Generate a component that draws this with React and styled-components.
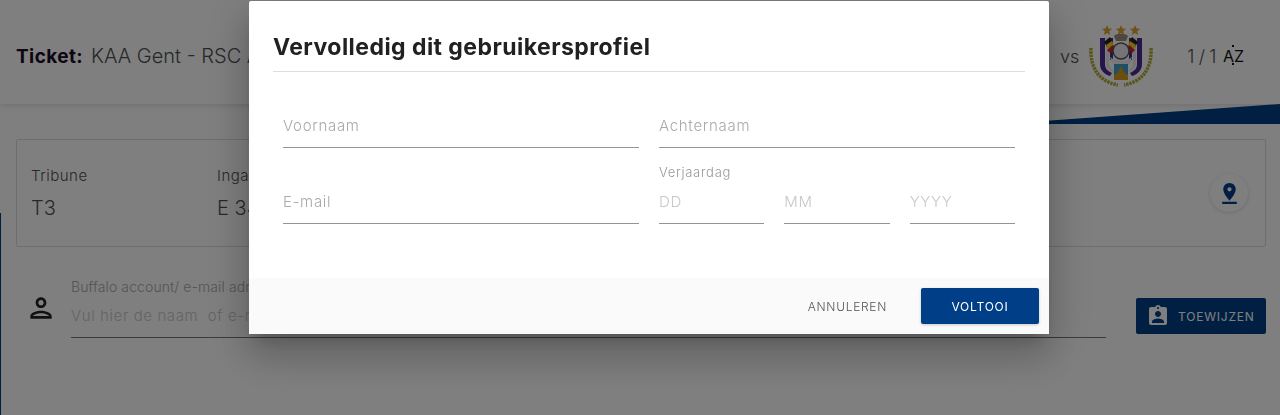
import React from 'react'
import styled, { createGlobalStyle } from 'styled-components'
import { MdOutlinePerson, MdPinDrop, MdAssignmentInd } from 'react-icons/md'

const GlobalStyle = createGlobalStyle`
  * { box-sizing: border-box; }
  html, body { margin: 0; height: 100%; background: #fff; overflow: hidden; }
  body { font-family: "Inter", "Open Sans", sans-serif; color: #505050; font-weight: 300; }
`

const Page = styled.div`
  position: relative;
  height: 415px;
  overflow: hidden;
`
const Header = styled.header`
  height: 104px;
  padding: 8px 36px 0 16px;
  display: flex;
  align-items: center;
  justify-content: space-between;
  background: #fff;
  box-shadow: 0 2px 6px rgba(0, 0, 0, 0.12);
`
const TicketTitle = styled.div`
  display: flex;
  align-items: center;
  gap: 8px;
  font-size: 20px;
  white-space: nowrap;
  b { font-size: 19px; font-weight: 700; color: #1a0a24; letter-spacing: 0.4px; }
`
const Match = styled.div`
  display: flex;
  align-items: center;
`
const Versus = styled.span`
  font-size: 18px;
  margin-right: 6px;
`
const Count = styled.span`
  font-size: 18px;
  margin-left: 32px;
  letter-spacing: -0.4px;
`
const SortMark = styled.span`
  position: relative;
  margin-left: 7px;
  font-size: 16px;
  font-weight: 400;
  color: #111;
  &::before, &::after {
    content: '';
    position: absolute;
    left: 9px;
    width: 2px;
    height: 2px;
    background: #111;
  }
  &::before { top: -1px; }
  &::after { bottom: 1px; }
`
const Wedge = styled.svg`
  position: absolute;
  top: 100px;
  right: 0;
  display: block;
`
const SideEdge = styled.div`
  position: absolute;
  left: 0;
  top: 213px;
  bottom: 0;
  width: 1px;
  background: #003f87;
`
const Content = styled.main`
  padding: 35px 14px 0 16px;
`
const InfoCard = styled.section`
  height: 108px;
  padding: 26px 14px 0;
  display: flex;
  border: 1px solid #ddd;
  border-radius: 2px;
  position: relative;
`
const InfoColumn = styled.div`
  width: 186px;
  span { display: block; font-size: 15px; line-height: 20px; letter-spacing: 0.5px; }
  strong { display: block; margin-top: 10px; font-size: 20px; line-height: 24px; font-weight: 300; }
`
const PinButton = styled.div`
  position: absolute;
  right: 17px;
  top: 34px;
  width: 38px;
  height: 38px;
  border-radius: 50%;
  display: flex;
  align-items: center;
  justify-content: center;
  background: #fff;
  color: #003f87;
  font-size: 25px;
  box-shadow: 0 1px 4px rgba(0, 0, 0, 0.14);
`
const AssignRow = styled.div`
  margin-top: 32px;
  display: flex;
  align-items: flex-start;
`
const PersonIcon = styled(MdOutlinePerson)`
  font-size: 32px;
  margin: 13px 14px 0 9px;
  flex: none;
  color: #222;
`
const AssignField = styled.div`
  width: 1035px;
  height: 59px;
  border-bottom: 1px solid #777;
  span { display: block; font-size: 14px; line-height: 16px; color: #a8a8a8; white-space: nowrap; letter-spacing: 0.1px; }
  em { display: block; margin-top: 11px; font-style: normal; font-size: 15px; line-height: 20px; color: #c8c8c8; letter-spacing: 0.6px; white-space: nowrap; }
`
const AssignButton = styled.button`
  margin-left: 30px;
  margin-top: 19px;
  width: 130px;
  height: 36px;
  display: flex;
  align-items: center;
  gap: 8px;
  padding: 0 0 0 10px;
  border: 0;
  border-radius: 2px;
  background: #003f87;
  color: #fff;
  font: 400 12px "Inter", sans-serif;
  letter-spacing: 0.8px;
  svg { font-size: 24px; }
`
const Overlay = styled.div`
  position: fixed;
  inset: 0;
  padding: 1px 0 0 18px;
  display: flex;
  justify-content: center;
  align-items: flex-start;
  background: rgba(0, 0, 0, 0.5);
`
const Modal = styled.div`
  width: 800px;
  height: 333px;
  display: flex;
  flex-direction: column;
  background: #fff;
  border-radius: 2px;
  box-shadow: 0 11px 15px -7px rgba(0,0,0,.2), 0 24px 38px 3px rgba(0,0,0,.14), 0 9px 46px 8px rgba(0,0,0,.12);
`
const ModalTitle = styled.h2`
  margin: 0 24px;
  height: 71px;
  padding-top: 31px;
  border-bottom: 1px solid #ddd;
  font-size: 23px;
  line-height: 30px;
  font-weight: 700;
  color: #212121;
  letter-spacing: 0.45px;
`
const FormGrid = styled.div`
  flex: 1;
  padding: 0 34px;
  display: grid;
  grid-template-columns: 1fr 1fr;
  column-gap: 20px;
  grid-auto-rows: 76px;
`
const Field = styled.div`
  align-self: end;
  height: 32px;
  border-bottom: 1px solid #949494;
  font-size: 15px;
  line-height: 20px;
  color: ${p => p.$faint ? '#c8c8c8' : '#aaa'};
  letter-spacing: 0.7px;
`
const DateField = styled.div`
  align-self: end;
  font-size: 13px;
  line-height: 16px;
  color: #999;
  letter-spacing: 0.7px;
`
const DateParts = styled.div`
  margin-top: 12px;
  display: grid;
  grid-template-columns: repeat(3, 1fr);
  column-gap: 20px;
`
const ModalFooter = styled.footer`
  height: 56px;
  padding: 0 10px;
  display: flex;
  align-items: center;
  justify-content: flex-end;
  background: #fafafa;
`
const CancelButton = styled.button`
  border: 0;
  background: none;
  margin-right: 34px;
  padding: 0;
  font: 300 12px "Inter", sans-serif;
  letter-spacing: 0.7px;
  color: #555;
`
const SubmitButton = styled.button`
  width: 118px;
  height: 36px;
  border: 0;
  border-radius: 2px;
  background: #003f87;
  color: #fff;
  font: 400 12px "Inter", sans-serif;
  letter-spacing: 0.8px;
  box-shadow: 0 1px 3px rgba(0, 0, 0, 0.2);
`

const Crest = () => (
  <svg width="70" height="72" viewBox="0 0 70 72">
    <g fill="#e0a030">
      <path d="M22 5l1.4 3.6 3.8.2-3 2.4 1 3.7-3.2-2-3.2 2 1-3.7-3-2.4 3.8-.2z" />
      <path d="M36 5l1.4 3.6 3.8.2-3 2.4 1 3.7-3.2-2-3.2 2 1-3.7-3-2.4 3.8-.2z" />
      <path d="M50 5l1.4 3.6 3.8.2-3 2.4 1 3.7-3.2-2-3.2 2 1-3.7-3-2.4 3.8-.2z" />
    </g>
    <path d="M6 28c-1 16 5 33 27 37M66 28c1 16-5 33-27 37" fill="none" stroke="#b5a83a" strokeWidth="3.5" strokeDasharray="2.5 .8" />
    <path d="M15 18h5v26c0 5 3 7 7 9l-2 3c-6-2-10-6-10-12z" fill="#4c2a92" />
    <path d="M57 18h-5v26c0 5-3 7-7 9l2 3c6-2 10-6 10-12z" fill="#4c2a92" />
    <path d="M21 18h3v25c0 4 2 6 4 7v2c-4-2-7-5-7-9z" fill="#e8e8f0" />
    <path d="M51 18h-3v25c0 4-2 6-4 7v2c4-2 7-5 7-9z" fill="#e8e8f0" />
    <path d="M25 18h3v22h-3zM44 18h3v22h-3z" fill="#4c2a92" />
    <path d="M19 22l6-5 2 5-5 5z" fill="#222" />
    <path d="M21 25l6-4 2 4-6 4z" fill="#f2d020" />
    <path d="M22 30l6-5 2 3-5 5z" fill="#d82020" />
    <path d="M53 22l-6-5-2 5 5 5z" fill="#222" />
    <path d="M51 25l-6-4-2 4 6 4z" fill="#f2d020" />
    <path d="M50 30l-6-5-2 3 5 5z" fill="#d82020" />
    <path d="M29 16c2-3 12-3 14 0l-2 5H31z" fill="#9a8f78" />
    <circle cx="36" cy="31" r="8" fill="#e8e8f0" stroke="#555" strokeWidth="1.5" />
    <path d="M25 37c6 5 16 5 22 0l-2 6c-5 2-13 2-18 0z" fill="#f0f0f4" />
    <path d="M29 44h14v11c-3 2-11 2-14 0z" fill="#3aa0c8" />
    <path d="M36 46l3 6 4 4v4H29v-4l4-4z" fill="#d89a20" />
  </svg>
)

const App = () => (
  <Page>
    <GlobalStyle />
    <Header>
      <TicketTitle><b>Ticket:</b> KAA Gent - RSC Anderlecht</TicketTitle>
      <Match>
        <Versus>vs</Versus>
        <Crest />
        <Count>1 / 1</Count>
        <SortMark>AZ</SortMark>
      </Match>
    </Header>
    <Wedge width="278" height="26" viewBox="0 0 278 26">
      <polygon points="0,24 278,4 278,24" fill="#003f87" />
    </Wedge>
    <SideEdge />
    <Content>
      <InfoCard>
        <InfoColumn><span>Tribune</span><strong>T3</strong></InfoColumn>
        <InfoColumn><span>Ingang</span><strong>E 34</strong></InfoColumn>
        <PinButton><MdPinDrop /></PinButton>
      </InfoCard>
      <AssignRow>
        <PersonIcon />
        <AssignField>
          <span>Buffalo account/ e-mail adres</span>
          <em>Vul hier de naam&nbsp; of e-mail adres in</em>
        </AssignField>
        <AssignButton><MdAssignmentInd />TOEWIJZEN</AssignButton>
      </AssignRow>
    </Content>
    <Overlay>
      <Modal>
        <ModalTitle>Vervolledig dit gebruikersprofiel</ModalTitle>
        <FormGrid>
          <Field>Voornaam</Field>
          <Field>Achternaam</Field>
          <Field>E-mail</Field>
          <DateField>
            Verjaardag
            <DateParts>
              <Field $faint>DD</Field>
              <Field $faint>MM</Field>
              <Field $faint>YYYY</Field>
            </DateParts>
          </DateField>
        </FormGrid>
        <ModalFooter>
          <CancelButton>ANNULEREN</CancelButton>
          <SubmitButton>VOLTOOI</SubmitButton>
        </ModalFooter>
      </Modal>
    </Overlay>
  </Page>
)

export default App
